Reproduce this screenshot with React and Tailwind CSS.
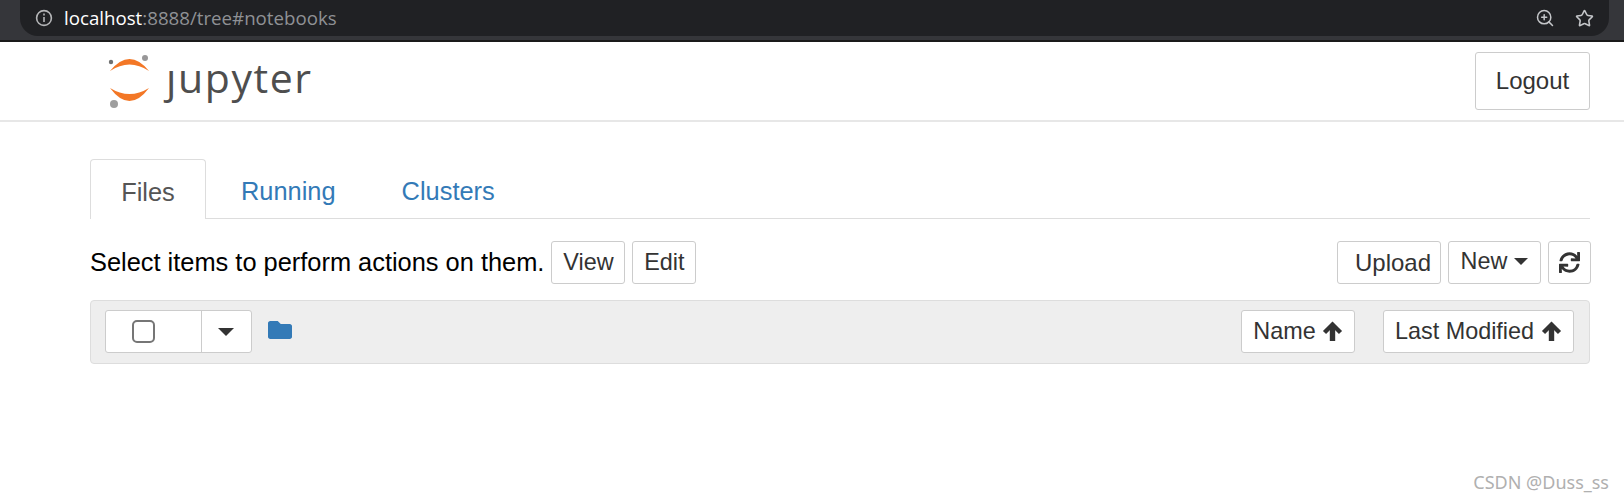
import React from "react";
import { ZoomIn, Star } from "lucide-react";
import { FaFolder, FaSync } from "react-icons/fa";

const btn = "flex items-center justify-center h-[43px] bg-white border border-[#ccc] rounded-[3px] text-[#333] text-[23.4px]";

function Caret({ size = 7, color = "#333", className = "" }) {
  return (
    <svg width={size * 2} height={size} viewBox="0 0 14 7" className={className} aria-hidden="true">
      <path d="M0 0h14L7 7z" fill={color} />
    </svg>
  );
}

function ArrowUp() {
  return (
    <svg width="21" height="21" viewBox="0 0 21 21" fill="none" stroke="#333" aria-hidden="true">
      <path d="M2.5 11.5 L10.5 3.5 L18.5 11.5" strokeWidth="4.4" />
      <path d="M10.5 4V20" strokeWidth="5.4" />
    </svg>
  );
}

function Logo() {
  return (
    <div className="flex items-center text-[#4e4e4e]" aria-label="jupyter">
      <svg width="60" height="60" viewBox="105 50 60 60" className="shrink-0" aria-hidden="true">
        <path d="M111 70 Q130.5 46 150 70 Q130.5 57 111 70z" fill="#f37726" />
        <path d="M111 87 Q130.5 113 150 87 Q130.5 99 111 87z" fill="#f37726" />
        <circle cx="146" cy="57" r="3" fill="#989798" />
        <circle cx="112" cy="61" r="2.2" fill="#6f7070" />
        <circle cx="115" cy="103" r="4" fill="#9e9e9e" />
      </svg>
      <span className="ml-[2px] -mt-[8px] text-[41px] font-medium leading-none tracking-[1.6px]" style={{ fontFamily: '"Open Sans", sans-serif' }}>ȷupyter</span>
    </div>
  );
}

export default function App() {
  return (
    <div className="relative h-[502px] bg-white overflow-hidden" style={{ fontFamily: '"Liberation Sans", Arial, sans-serif' }}>
      {/* browser bar */}
      <div className="h-[42px] bg-[#35363a] border-b-2 border-[#1a1a1a] pl-[20px] pr-[15px]">
        <div className="flex items-center h-[36px] bg-[#202124] rounded-b-[18px] pl-[15px] pr-[15px]">
          <svg width="18" height="18" viewBox="0 0 18 18" fill="none" stroke="#b5b6b8" strokeWidth="1.6" aria-hidden="true">
            <circle cx="9" cy="9" r="7.4" />
            <path d="M9 8v5" />
            <path d="M9 4.6v1.8" />
          </svg>
          <div className="ml-[11px] text-[18.7px] text-[#8f9195]" style={{ fontFamily: '"Open Sans", sans-serif' }}>
            <span className="text-white">localhost</span>:8888/tree#notebooks
          </div>
          <div className="ml-auto flex items-center gap-[20px] text-[#c4c6c9]">
            <ZoomIn size={20} strokeWidth={1.8} />
            <Star size={19} strokeWidth={2} />
          </div>
        </div>
      </div>

      {/* header */}
      <header className="flex items-center justify-between h-[80px] border-b-2 border-[#e7e7e7] pl-[104px] pr-[34px]">
        <Logo />
        <button className={`${btn} !h-[58px] w-[115px] !text-[24px]`}>Logout</button>
      </header>

      <main className="pl-[90px] pr-[34px] pt-[37px]">
        {/* tabs */}
        <nav className="flex h-[60px] border-b border-[#ddd] text-[25.4px]">
          <div className="flex items-center justify-center w-[116px] h-[60px] pt-[5px] bg-white border border-[#ddd] border-b-0 rounded-t-[4px] text-[#555]">Files</div>
          <div className="flex items-center ml-[4px] pt-[5px] px-[31px] text-[#337ab7]">Running</div>
          <div className="flex items-center pt-[5px] px-[35px] text-[#337ab7]">Clusters</div>
        </nav>

        {/* toolbar */}
        <div className="flex items-center mt-[22px]">
          <span className="text-[25.4px] text-black">Select items to perform actions on them.</span>
          <div className="flex gap-[7px] ml-[7px]">
            <div className={`${btn} w-[74px]`}>View</div>
            <div className={`${btn} w-[64px]`}>Edit</div>
          </div>
          <div className="flex gap-[7px] ml-auto -mr-px">
            <div className={`${btn} w-[104px] pl-[8px] pt-[1px] text-[24px]`}>Upload</div>
            <div className={`${btn} w-[93px] gap-[7px] pb-[2px]`}>
              New
              <Caret size={7} />
            </div>
            <div className={`${btn} w-[43px]`}>
              <FaSync size={21} color="#333" />
            </div>
          </div>
        </div>

        {/* list header */}
        <div className="flex items-center h-[64px] mt-[16px] bg-[#eee] border border-[#ddd] rounded-[4px] pl-[14px] pr-[15px] pb-[1px]">
          <div className="flex h-[43px] w-[147px] bg-white border border-[#ccc] rounded-[3px]">
            <div className="flex items-center pl-[26px] w-[96px] border-r border-[#ccc]">
              <span className="block w-[23px] h-[23px] border-2 border-[#767676] rounded-[5px] bg-white" />
            </div>
            <div className="flex items-center justify-center flex-1 pr-[2px]">
              <Caret size={8} />
            </div>
          </div>
          <FaFolder size={24} color="#337ab7" className="ml-[16px] -mt-[4px]" />
          <div className={`${btn} w-[114px] gap-[6px] ml-auto`}>
            Name
            <ArrowUp />
          </div>
          <div className={`${btn} w-[191px] gap-[7px] ml-[28px]`}>
            Last Modified
            <ArrowUp />
          </div>
        </div>
      </main>

      {/* watermark */}
      <div className="absolute right-[15px] bottom-[6px] text-[18px] text-[#b0b0b0]" style={{ fontFamily: '"Noto Sans", sans-serif' }}>CSDN @Duss_ss</div>
    </div>
  );
}
